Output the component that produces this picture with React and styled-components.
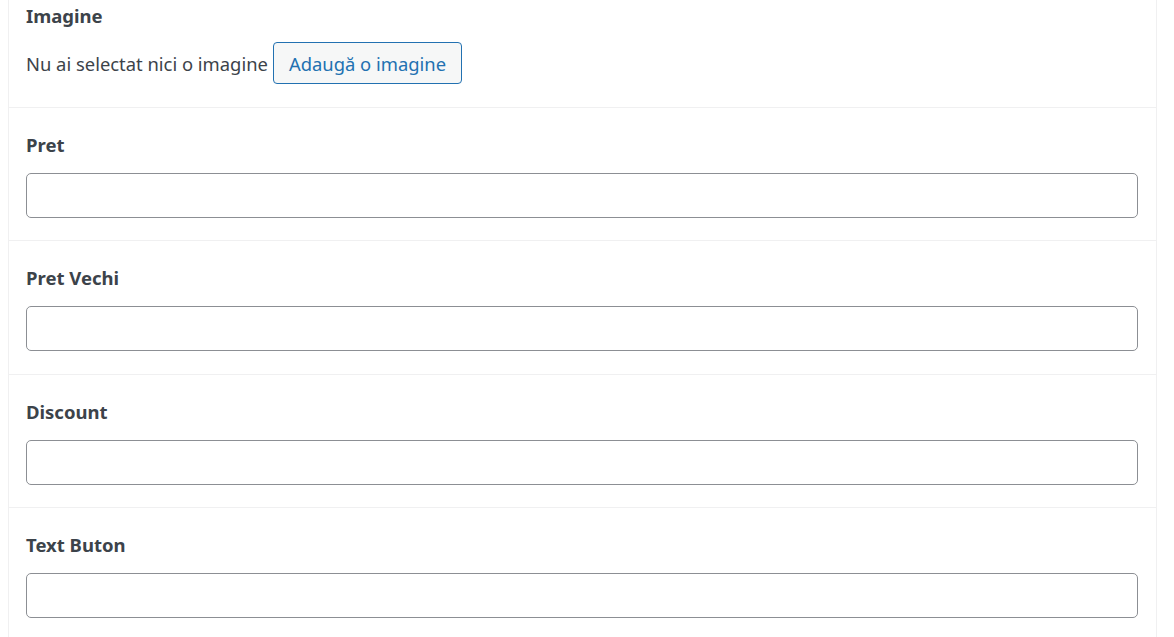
import React from "react";
import styled, { createGlobalStyle } from "styled-components";

const GlobalStyle = createGlobalStyle`
  body {
    margin: 0;
    background: #fff;
    font-family: "Noto Sans", "Open Sans", sans-serif;
    color: #3c434a;
  }
`;

const Panel = styled.div`
  margin: 0 17px 0 8px;
  border-left: 1px solid #f0f0f1;
  border-right: 1px solid #f0f0f1;
  background: #fff;
`;

const Field = styled.div`
  padding: ${(p) => (p.$first ? "4px" : "25px")} 18px ${(p) => (p.$first ? "22px" : "22.34px")} 17px;
  border-top: ${(p) => (p.$first ? "none" : "1px solid #f0f0f1")};
`;

const Label = styled.label`
  display: block;
  font-size: 18.5px;
  line-height: 24px;
  font-weight: 700;
  color: #3c434a;
  margin-bottom: ${(p) => (p.$small ? "14px" : "16px")};
`;

const ImageRow = styled.div`
  display: flex;
  align-items: center;
  gap: 5px;
  padding-bottom: 1px;
  font-size: 18.4px;
  color: #3c434a;
`;

const Button = styled.button`
  height: 42px;
  padding: 0 15px;
  border: 1px solid #2271b1;
  border-radius: 4px;
  background: #f6f7f7;
  color: #2271b1;
  font-family: inherit;
  font-size: 18.4px;
  cursor: pointer;
`;

const Input = styled.input`
  display: block;
  box-sizing: border-box;
  width: 100%;
  height: 45px;
  border: 1px solid #8c8f94;
  border-radius: 5px;
  background: #fff;
  font-family: inherit;
  font-size: 17px;
  padding: 0 10px;
  outline: none;
`;

const fields = ["Pret", "Pret Vechi", "Discount", "Text Buton"];

export default function App() {
  return (
    <>
      <GlobalStyle />
      <Panel>
        <Field $first>
          <Label $small>Imagine</Label>
          <ImageRow>
            <span>Nu ai selectat nici o imagine</span>
            <Button type="button">Adaugă o imagine</Button>
          </ImageRow>
        </Field>
        {fields.map((name) => (
          <Field key={name}>
            <Label>{name}</Label>
            <Input type="text" />
          </Field>
        ))}
      </Panel>
    </>
  );
}
